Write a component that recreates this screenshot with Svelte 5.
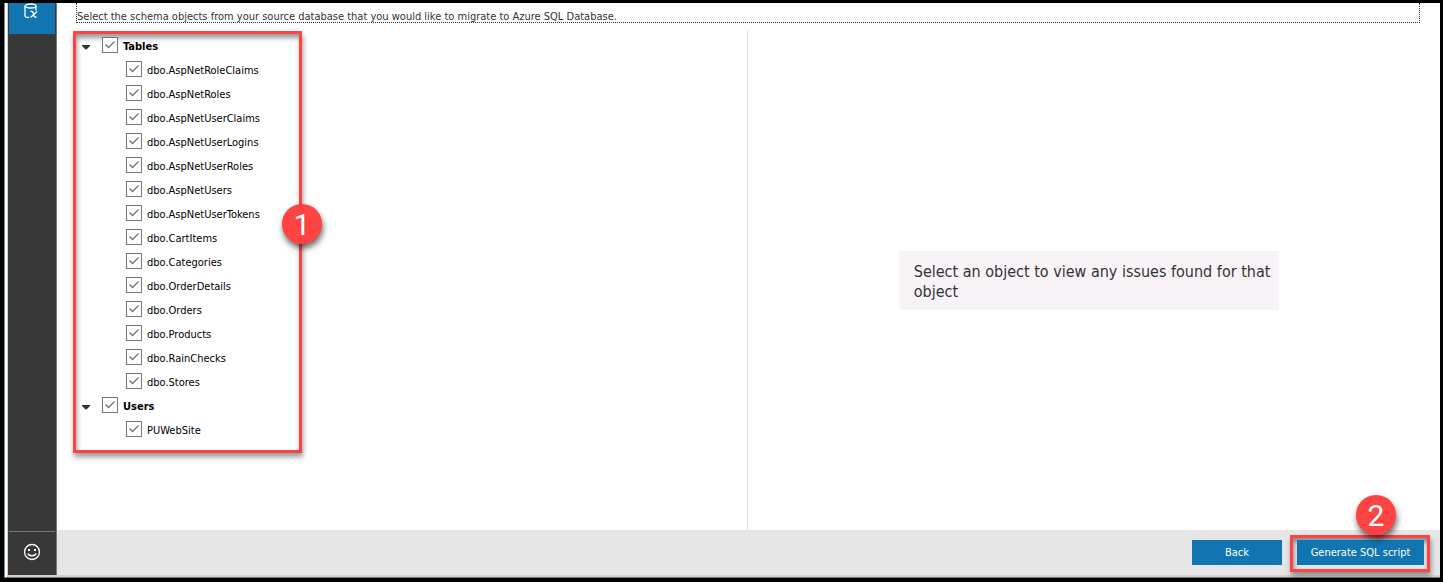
<script>
  let groups = $state([
    {
      name: 'Tables',
      open: true,
      items: [
        'dbo.AspNetRoleClaims', 'dbo.AspNetRoles', 'dbo.AspNetUserClaims', 'dbo.AspNetUserLogins',
        'dbo.AspNetUserRoles', 'dbo.AspNetUsers', 'dbo.AspNetUserTokens', 'dbo.CartItems',
        'dbo.Categories', 'dbo.OrderDetails', 'dbo.Orders', 'dbo.Products', 'dbo.RainChecks', 'dbo.Stores'
      ].map((name) => ({ name, checked: true }))
    },
    { name: 'Users', open: true, items: [{ name: 'PUWebSite', checked: true }] }
  ]);

  function toggleGroup(group, checked) {
    for (const item of group.items) item.checked = checked;
  }
</script>

{#snippet tick()}
  <svg class="tick" viewBox="0 0 16 16" aria-hidden="true"><path d="M3.500 7.500 6.500 10.500 12.500 4.500" /></svg>
{/snippet}

<div class="frame">
  <div class="window">
    <nav class="sidebar" aria-label="Main">
      <button class="side-button project" aria-label="Migration project">
        <svg viewBox="0 0 18 20" width="18" height="20" aria-hidden="true">
          <ellipse cx="7.500" cy="3" rx="5.500" ry="2" />
          <path d="M2 3v10c0 .8 1.500 1.500 4 1.500M13 3v4.500" />
          <path d="M7.500 8.500c2-.5 2.500.3 3 2.500s1 3.500 3 3M14 8.500 7.500 14.500" />
        </svg>
      </button>
      <button class="side-button feedback" aria-label="Send feedback">
        <svg viewBox="0 0 18 18" width="18" height="18" aria-hidden="true">
          <circle cx="9" cy="9" r="7.500" />
          <path d="M5 10.500c.8 3 7.200 3 8 0" />
          <path class="eyes" d="M5 6h2v2H5zM11 6h2v2h-2z" />
        </svg>
      </button>
    </nav>

    <div class="content">
      <p class="intro">Select the schema objects from your source database that you would like to migrate to Azure SQL Database.</p>

      <main class="panes">
        <section class="objects" aria-label="Schema objects">
          <div class="callout tree">
            <ul>
              {#each groups as group}
                <li>
                  <div class="row">
                    <button class="expander" aria-label="Toggle {group.name}" aria-expanded={group.open} onclick={() => (group.open = !group.open)}>
                      <svg viewBox="0 0 8 5" width="8" height="5" aria-hidden="true"><path d="M0 0h8v1L4.500 4.500h-1L0 1z" /></svg>
                    </button>
                    <label class="group">
                      <span class="box">
                        <input type="checkbox" checked={group.items.every((i) => i.checked)} onchange={(e) => toggleGroup(group, e.currentTarget.checked)} />
                        {@render tick()}
                      </span>
                      {group.name}
                    </label>
                  </div>
                  {#if group.open}
                    <ul class="children">
                      {#each group.items as item}
                        <li class="row">
                          <label>
                            <span class="box">
                              <input type="checkbox" bind:checked={item.checked} />
                              {@render tick()}
                            </span>
                            {item.name}
                          </label>
                        </li>
                      {/each}
                    </ul>
                  {/if}
                </li>
              {/each}
            </ul>
            <span class="badge badge-side">1</span>
          </div>
        </section>
        <section class="issues" aria-label="Issues">
          <p class="notice">Select an object to view any issues found for that object</p>
        </section>
      </main>

      <footer class="actions">
        <button class="action back">Back</button>
        <div class="callout generate">
          <button class="action">Generate SQL script</button>
          <span class="badge badge-top">2</span>
        </div>
      </footer>
    </div>
  </div>
</div>

<style>
  :global(body) {
    margin: 0;
    background: #000;
  }

  .frame {
    box-sizing: border-box;
    min-height: 100vh;
    padding: 3px 3px 4px 4px;
    display: flex;
    background: #000;
    font-family: "DejaVu Sans Condensed", Tahoma, "Noto Sans", sans-serif;
    font-size: 11px;
    line-height: 16px;
    color: #000;
  }

  .window {
    flex: 1;
    display: flex;
    border-left: 1px solid #6b8da5;
    border-bottom: 1px solid #77736f;
    box-shadow: inset 2px 0 #fff, inset 0 -2px #d4d0c8;
    padding: 0 0 2px 3px;
    background: #d4d0c8;
  }

  .sidebar {
    flex: none;
    width: 46px;
    padding: 0 1px;
    border-right: 1px solid #777;
    display: flex;
    flex-direction: column;
    justify-content: space-between;
    background: #383838;
  }

  button {
    border: 0;
    padding: 0;
    font: inherit;
  }

  .side-button {
    display: flex;
    justify-content: center;
    background: none;
  }

  .side-button svg {
    fill: none;
    stroke: #fff;
    stroke-width: 1.3;
  }

  .side-button .eyes {
    fill: #fff;
    stroke: none;
  }

  .project {
    height: 31px;
    background: #1075b0;
  }

  .feedback {
    height: 44px;
    padding-bottom: 4px;
    align-items: center;
    border-top: 1px solid #777;
  }

  .content {
    flex: 1;
    min-width: 0;
    display: flex;
    flex-direction: column;
    background: #fff;
  }

  .intro {
    margin: 0 20px 0 19px;
    padding-top: 8px;
    border: 1px dotted #333;
    border-top: 0;
    line-height: 11px;
    color: #333;
  }

  .panes {
    flex: 1;
    display: grid;
    grid-template-columns: 1fr 1fr;
    padding: 8px 18px 0 16px;
  }

  .objects {
    border-right: 1px solid #ddd;
  }

  .callout {
    position: relative;
    box-sizing: border-box;
    border: 3px solid #ff4343;
    box-shadow: 1px 4px 5px rgba(0, 0, 0, 0.4), inset 1px 4px 5px rgba(0, 0, 0, 0.4);
  }

  .tree {
    width: 229px;
    padding-bottom: 8px;
  }

  ul {
    margin: 0;
    padding: 0;
    list-style: none;
  }

  .row {
    box-sizing: border-box;
    height: 24px;
    padding-top: 2px;
    display: flex;
    align-items: center;
  }

  .expander {
    width: 26px;
    height: 16px;
    padding: 0 0 0 6px;
    display: flex;
    align-items: center;
    background: none;
  }

  .expander svg {
    fill: #333;
  }

  .children {
    padding-left: 50px;
  }

  label {
    display: flex;
    align-items: center;
    gap: 5px;
  }

  .group {
    font-weight: bold;
  }

  .box {
    display: grid;
    width: 16px;
    height: 16px;
    margin-bottom: 4px;
  }

  .box > :global(*) {
    grid-area: 1 / 1;
  }

  .box input {
    appearance: none;
    box-sizing: border-box;
    width: 16px;
    height: 16px;
    margin: 0;
    border: 1px solid #777;
    background: #fff;
  }

  .tick {
    width: 16px;
    height: 16px;
    fill: none;
    stroke: #777;
    stroke-width: 1.4;
    pointer-events: none;
    visibility: hidden;
  }

  .box input:checked + .tick {
    visibility: visible;
  }

  .issues {
    display: flex;
    align-items: center;
    justify-content: center;
  }

  .notice {
    box-sizing: border-box;
    width: 380px;
    max-width: 100%;
    margin: 0 0 0 8px;
    padding: 11px 4px 8px 15px;
    border-radius: 1px;
    background: #f7f3f7;
    font-size: 16px;
    line-height: 20px;
    color: #333;
  }

  .actions {
    display: flex;
    align-items: center;
    justify-content: flex-end;
    gap: 8px;
    padding: 5px 10px 3px;
    background: #e6e6e6;
  }

  .action {
    box-sizing: border-box;
    height: 25px;
    padding-top: 1px;
    display: block;
    background: #1075b0;
    color: #fff;
    text-align: center;
  }

  .back {
    width: 90px;
    margin-bottom: 2px;
  }

  .generate {
    padding: 2px 3px 4px 4px;
  }

  .generate .action {
    width: 127px;
  }

  .badge {
    position: absolute;
    width: 40px;
    height: 40px;
    border-radius: 50%;
    background: #ff4343;
    box-shadow: 1px 4px 6px rgba(0, 0, 0, 0.6);
    color: #fff;
    font: 30px/42px Roboto, Arial, sans-serif;
    text-align: center;
  }

  .badge-side {
    top: 170px;
    right: -23px;
  }

  .badge-top {
    top: -43px;
    right: 31px;
  }
</style>
